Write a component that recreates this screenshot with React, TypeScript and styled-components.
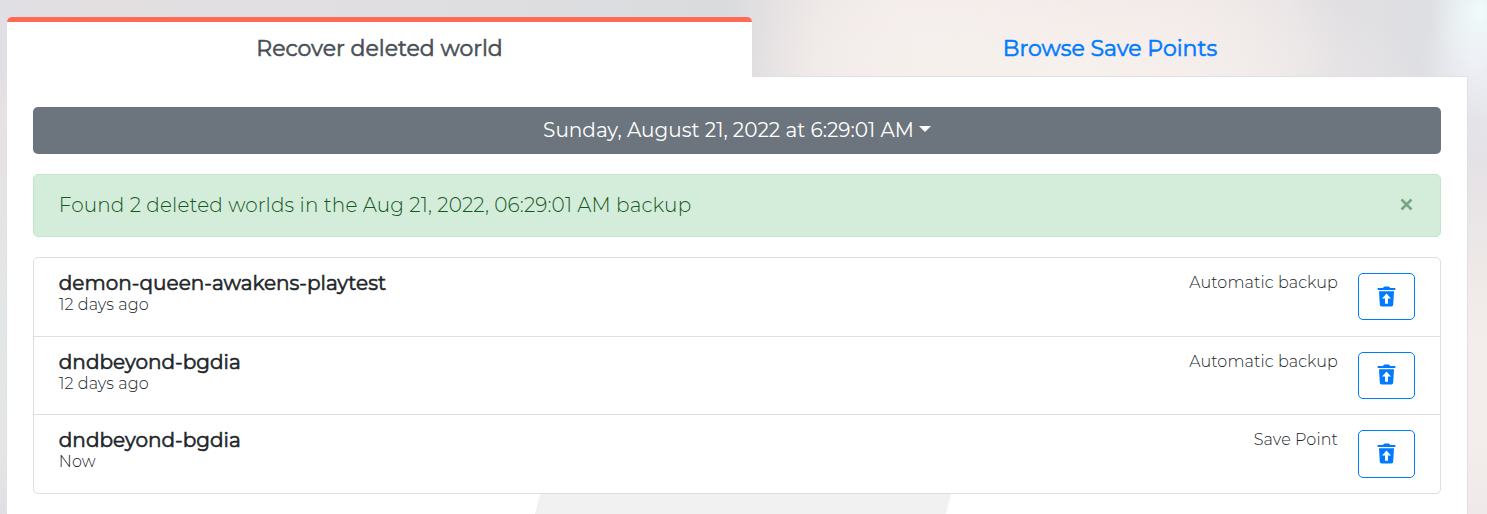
import React from 'react';
import styled, { createGlobalStyle } from 'styled-components';

const GlobalStyle = createGlobalStyle`
  * { box-sizing: border-box; }
  body {
    margin: 0;
    font-family: Montserrat, Inter, "Liberation Sans", sans-serif;
    font-size: 20px;
    font-weight: 300;
    line-height: 30px;
    color: #212529;
  }
  button { font: inherit; cursor: pointer; }
`;

const Page = styled.div`
  height: 514px;
  overflow: hidden;
  padding: 17px 19px 0 6px;
  background:
    radial-gradient(ellipse 50px 60px at 1480px 12px, #f0fbfb 0%, #f0fbfb88 45%, #f0fbfb00 100%),
    radial-gradient(ellipse 55px 60px at 1475px 62px, #efeff5 0%, #efeff500 100%),
    radial-gradient(ellipse 340px 110px at 1080px 76px, #f7f1ee 0%, #f7f1ee00 100%),
    radial-gradient(ellipse 190px 130px at 940px 45px, #f4eeec 0%, #f4eeec00 100%),
    linear-gradient(to bottom, transparent 76px, #e5e2e6 160px, #eee8e7 270px, #f3eeeb 340px, #f3eeeb 440px, #efe9ea 514px) 1468px 0 / 19px 514px no-repeat,
    linear-gradient(to bottom, transparent 60px, #e6e0e2 100px, #e6e3e5 200px, #e4e7e7 320px, #e5e5e5 450px, #e0e0e4 514px) 0 0 / 7px 514px no-repeat,
    linear-gradient(to right, #e0dfe4 0, #e3dfe1 90px, #e1dfe2 280px, #dedde0 500px, #dcdde0 600px, #d9dbdc 720px, #e2dfe1 760px, #ece6e5 820px, #f2eae9 900px, #f2e8e6 1000px, #f1e9e7 1180px, #eae5e6 1280px, #e1dfe2 1340px, #dedfe3 1430px, #e4e8eb 1487px);
`;

const Tabs = styled.nav`
  display: flex;
  height: 60px;
  margin: 0 0 -1px 1px;
`;

const Tab = styled.a<{ $active?: boolean }>`
  flex: ${p => (p.$active ? '0 0 745px' : '1')};
  height: 60px;
  padding-top: ${p => (p.$active ? 12 : 17)}px;
  text-align: center;
  font-size: 22px;
  font-weight: 400;
  -webkit-text-stroke: 0.6px currentColor;
  color: ${p => (p.$active ? '#495057' : '#007bff')};
  border-radius: 5px 5px 0 0;
  border-top: ${p => (p.$active ? '5px solid #ff6a56' : '0')};
  background: ${p => (p.$active ? '#fff' : 'transparent')};
  position: relative;
  z-index: 1;
`;

const Panel = styled.main`
  height: 438px;
  padding: 30px 26px 0 26px;
  border: 1px solid #dee2e6;
  border-bottom: 0;
  background: #fff;
`;

const BackupSelect = styled.button`
  display: flex;
  width: 100%;
  height: 47px;
  align-items: center;
  justify-content: center;
  gap: 5px;
  padding: 0 0 2px;
  border: 0;
  border-radius: 5px;
  background: #6c757d;
  color: #fff;
  font-weight: 400;
`;

const Caret = styled.span`
  border: 6px solid transparent;
  border-top-color: #fff;
  border-bottom: 0;
  margin-top: -1px;
`;

const Alert = styled.div`
  display: flex;
  align-items: center;
  justify-content: space-between;
  height: 63px;
  margin: 20px 0;
  padding: 0 27px 2px 24.8px;
  border: 1px solid #c3e6cb;
  border-radius: 5px;
  background: #d4edda;
  color: #155724;
  letter-spacing: 0.13px;
`;

const CloseButton = styled.button`
  display: flex;
  padding: 0;
  border: 0;
  background: none;
  color: #78a684;
`;

const WorldList = styled.ul`
  height: 237px;
  margin: 0;
  padding: 0;
  display: grid;
  grid-template-rows: 79px 78px 78px;
  list-style: none;
  border: 1px solid #dfdfdf;
  border-radius: 5px;
`;

const WorldRow = styled.li`
  display: flex;
  padding: 15px 25px 0 24.8px;
  &:not(:last-child) { border-bottom: 1px solid #dfdfdf; }
`;

const WorldInfo = styled.div`
  flex: 1;
`;

const WorldName = styled.h5`
  margin: -2px 0 0;
  font-size: 20px;
  font-weight: 400;
  line-height: 24px;
  -webkit-text-stroke: 0.6px currentColor;
`;

const Small = styled.div`
  font-size: 16px;
  line-height: 19px;
  letter-spacing: 0.1px;
`;

const Kind = styled(Small)`
  margin-right: 20px;
`;

const RestoreButton = styled.button<{ $height: number; $lift: number }>`
  display: flex;
  width: 57px;
  height: ${p => p.$height}px;
  align-items: center;
  justify-content: center;
  padding: 0 0 ${p => p.$lift}px;
  border: 1px solid #007bff;
  border-radius: 5px;
  background: transparent;
  color: #007bff;
`;

const Backdrop = styled.div`
  width: 416px;
  height: 20px;
  margin-left: 502px;
  background: #f1f1f1;
  clip-path: polygon(5px 0, 100% 0, 411px 100%, 0 100%);
`;

const TrashRestoreIcon = () => (
  <svg width="19" height="21" viewBox="-0.4 0 19 21" fill="currentColor">
    <path d="M0.7 2H5.6L6.3 1Q6.6.5 7.2.5H11.2Q11.8.5 12.1 1L12.8 2H17.5Q18 2 18 2.5V3.4Q18 3.9 17.5 3.9H.7Q.2 3.9.2 3.4V2.5Q.2 2 .7 2Z" />
    <path
      fillRule="evenodd"
      d="M1.6 5.2H16.6L15.8 18.7Q15.7 20.5 13.9 20.5H4.3Q2.5 20.5 2.4 18.7ZM9.1 7.6 4.6 12.5H7.6V17.8H10.6V12.5H13.6Z"
    />
  </svg>
);

const worlds = [
  { name: 'demon-queen-awakens-playtest', age: '12 days ago', kind: 'Automatic backup', height: 47, lift: 0 },
  { name: 'dndbeyond-bgdia', age: '12 days ago', kind: 'Automatic backup', height: 47, lift: 2 },
  { name: 'dndbeyond-bgdia', age: 'Now', kind: 'Save Point', height: 48, lift: 1 },
];

export default function App() {
  return (
    <Page>
      <GlobalStyle />
      <Tabs>
        <Tab $active>Recover deleted world</Tab>
        <Tab>Browse Save Points</Tab>
      </Tabs>
      <Panel>
        <BackupSelect>
          <span>Sunday, August 21, 2022 at 6:29:01 AM</span>
          <Caret />
        </BackupSelect>
        <Alert>
          <span>Found 2 deleted worlds in the Aug 21, 2022, 06:29:01 AM backup</span>
          <CloseButton aria-label="Close">
            <svg width="13" height="13" viewBox="0 0 13 13" stroke="currentColor" strokeWidth="2.6">
              <path d="M1.5 1.5 11.5 11.5M11.5 1.5 1.5 11.5" />
            </svg>
          </CloseButton>
        </Alert>
        <WorldList>
          {worlds.map((world, i) => (
            <WorldRow key={i}>
              <WorldInfo>
                <WorldName>{world.name}</WorldName>
                <Small>{world.age}</Small>
              </WorldInfo>
              <Kind>{world.kind}</Kind>
              <RestoreButton aria-label="Restore" $height={world.height} $lift={world.lift}>
                <TrashRestoreIcon />
              </RestoreButton>
            </WorldRow>
          ))}
        </WorldList>
        <Backdrop />
      </Panel>
    </Page>
  );
}
